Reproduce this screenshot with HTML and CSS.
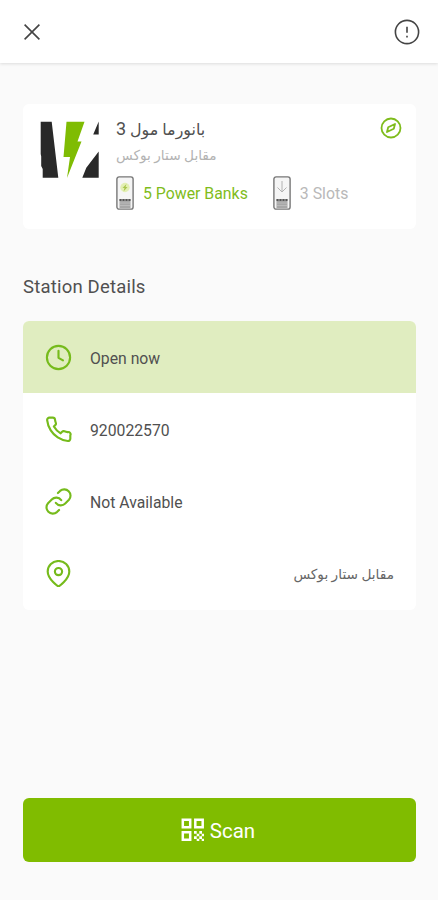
FILE: index.html
```html
<!DOCTYPE html>
<html lang="en">
<head>
<meta charset="utf-8">
<title>Station Details</title>
<link rel="stylesheet" href="styles.css">
</head>
<body>
<header class="bar">
  <svg class="close" width="18" height="18" viewBox="0 0 18 18"><path d="M1.6 1.6l14.8 14.8M16.4 1.6L1.6 16.4"/></svg>
  <svg class="info" width="26" height="26" viewBox="0 0 26 26"><circle cx="13" cy="13" r="11.6"/><path d="M13 7.8v6M13 16.8v1.7"/></svg>
</header>
<main>
  <section class="station">
    <svg class="logo" width="60" height="60" viewBox="0 0 60 60">
      <path fill="#292929" d="M.7 1.700h11l6.600 56H2.700V49l-1.500-3V36.500L.7 34z"/>
      <path fill="#7fbc03" d="M26.500 1.700h18L37.500 21.500h4L27 58l3-21h-6.500z"/>
      <path fill="#292929" d="M58.700 1.500v13h-5.500zM58.700 31.500v26.200H42.300l4-10z"/>
    </svg>
    <div class="info-col">
      <div class="name" dir="rtl">بانورما مول <span class="num">3</span></div>
      <div class="place" dir="rtl">مقابل ستار بوكس</div>
      <div class="counts">
        <svg width="18" height="34" viewBox="0 0 18 34">
          <rect class="shell" x=".9" y=".9" width="16.2" height="32.2" rx="2.2"/>
          <circle cx="9" cy="11.5" r="4.7" fill="#e3efb4"/><path fill="#a9c54d" d="M10.5 8L6.5 12h2l-1 3.5 4-4.5h-2z"/>
          <path fill="#a7a7a7" d="M3.5 23h11v9h-11z"/><path stroke="#555" stroke-width="2" stroke-dasharray="2 1" d="M3.5 24h11"/><path stroke="#c4c4c4" stroke-width=".7" d="M4 27h10M4 29.5h10"/>
        </svg>
        <span class="banks">5 Power Banks</span>
        <svg class="slot-icon" width="18" height="34" viewBox="0 0 18 34">
          <rect class="shell" x=".9" y=".9" width="16.2" height="32.2" rx="2.2"/>
          <path fill="none" stroke="#b2b2b2" d="M9 5v10.5M4.500 11.500L9 16l4.500-4.500"/>
          <path fill="#a7a7a7" d="M3.500 23h11v9h-11z"/><path stroke="#555" stroke-width="2" stroke-dasharray="2 1" d="M3.500 24h11"/><path stroke="#c4c4c4" stroke-width=".7" d="M4 27h10M4 29.500h10"/>
        </svg>
        <span class="slots">3 Slots</span>
      </div>
    </div>
    <svg class="compass" width="22" height="22" viewBox="0 0 22 22"><circle cx="11" cy="11" r="9.500"/><path d="M15 7l-1.200 4.800L7 15l1.200-4.800z"/></svg>
  </section>
  <h1>Station Details</h1>
  <section class="details">
    <div class="row open">
      <svg class="ico" viewBox="0 0 24 24"><circle cx="12" cy="12" r="10.300"/><path d="M12 6v6.300l4 2.200"/></svg>
      <span>Open now</span>
    </div>
    <div class="row">
      <svg class="ico" viewBox="0 0 24 24"><path d="M22.500 17.200v3a2 2 0 0 1-2.200 2 20.500 20.500 0 0 1-9-3.200 20.200 20.200 0 0 1-6.200-6.200A20.500 20.500 0 0 1 1.900 3.700a2 2 0 0 1 2-2.200h3a2 2 0 0 1 2 1.700c.13 1 .37 1.900.7 2.800a2 2 0 0 1-.45 2.100L7.900 9.400a16 16 0 0 0 6 6l1.300-1.300a2 2 0 0 1 2.100-.45c.9.340 1.850.57 2.800.7a2 2 0 0 1 2.400 2.850z"/></svg>
      <span>920022570</span>
    </div>
    <div class="row">
      <svg class="ico" viewBox="0 0 24 24"><path d="M9.600 13.200a5.600 5.600 0 0 0 8.400.6l3.300-3.300a5.600 5.600 0 0 0-7.900-7.900l-1.900 1.900M14.400 10.800a5.600 5.600 0 0 0-8.400-.6l-3.300 3.300a5.600 5.600 0 0 0 7.900 7.900l1.900-1.900"/></svg>
      <span>Not Available</span>
    </div>
    <div class="row">
      <svg class="ico" viewBox="0 0 24 24"><path d="M21.600 10.200c0 7-9.600 13.400-9.600 13.400S2.400 17.200 2.400 10.200a9.600 9.300 0 0 1 19.200 0z"/><circle cx="12" cy="10.300" r="3.200"/></svg>
      <span class="address" dir="rtl">مقابل ستار بوكس</span>
    </div>
  </section>
</main>
<button class="scan">
  <svg width="24" height="24" viewBox="0 0 24 24"><path fill="none" stroke="#fff" stroke-width="2.500" d="M1.800 1.800h7.400v7.400H1.800zM14.300 1.800h7.400v7.400h-7.400zM1.800 14.300h7.400v7.400H1.800z"/><path fill="#fff" d="M13 13h2.700v2.700H13zM18.300 13H21v2.700h-2.700zM15.700 15.700h2.600v2.600h-2.600zM20.700 15.700H23v2.600h-2.300zM13 18.300h2.700V21H13zM18.300 18.300H21V21h-2.700zM15.700 20.700h2.600V23h-2.600zM20.700 20.700H23V23h-2.300z"/></svg>
  <span>Scan</span>
</button>
</body>
</html>
```
FILE: styles.css
```css
* { box-sizing: border-box; }
body {
  margin: 0;
  height: 900px;
  display: flex;
  flex-direction: column;
  background: #fafafa;
  color: #505050;
  font-family: Roboto, "DejaVu Sans", sans-serif;
  overflow: hidden;
}
svg { display: block; flex: none; }
.bar {
  height: 63px;
  flex: none;
  padding: 0 18px 0 23px;
  display: flex;
  align-items: center;
  justify-content: space-between;
  background: #fff;
  box-shadow: 0 1px 3px rgba(0, 0, 0, .12);
}
.close, .info { fill: none; stroke: #444; stroke-width: 1.6; }
main { padding: 41px 22px 0 23px; }
.station {
  height: 125px;
  padding: 13px 14px 0 17px;
  display: flex;
  background: #fff;
  border-radius: 6px;
}
.logo { margin-top: 3px; }
.info-col { margin-left: 16px; flex: 1; display: flex; flex-direction: column; align-items: flex-start; white-space: nowrap; }
.name { height: 24px; line-height: 24px; font-size: 15.900px; }
.num { font-size: 18px; }
.place { height: 29px; line-height: 28px; font-size: 13.700px; color: #b3b3b3; }
.counts { display: flex; align-items: center; height: 34px; margin-top: 6px; font-size: 15.850px; }
.shell { fill: #f5f5f5; stroke: #777; stroke-width: 1.4; }
.banks { margin-left: 9px; color: #7fbc1c; }
.slot-icon { margin-left: 25px; }
.slots { margin-left: 9px; color: #b9b9b9; }
.compass { fill: none; stroke: #7fbc1c; stroke-width: 1.8; stroke-linejoin: round; }
h1 { margin: 46px 0 0; height: 24px; line-height: 24px; font-size: 18.500px; font-weight: 400; letter-spacing: .2px; }
.details { margin-top: 22px; padding-bottom: 1px; background: #fff; border-radius: 6px; overflow: hidden; }
.row { height: 72px; padding: 0 22px; display: flex; align-items: center; font-size: 15.750px; }
.row span { margin-left: 18px; padding-top: 2px; }
.open { background: #e0edc0; }
.ico { width: 27px; height: 27px; fill: none; stroke: #76bb1c; stroke-width: 1.9; stroke-linecap: round; stroke-linejoin: round; }
.row .address { margin-left: auto; font-size: 13.700px; color: #666; }
.scan {
  margin: auto 22px 38px 23px;
  height: 64px;
  flex: none;
  display: flex;
  align-items: center;
  justify-content: center;
  gap: 5px;
  padding: 0 9px 0 6px;
  border: 0;
  border-radius: 6px;
  background: #80bc00;
  color: #fff;
  font: 400 20.500px Roboto, sans-serif;
}
.scan span { padding-top: 1px; }
```
